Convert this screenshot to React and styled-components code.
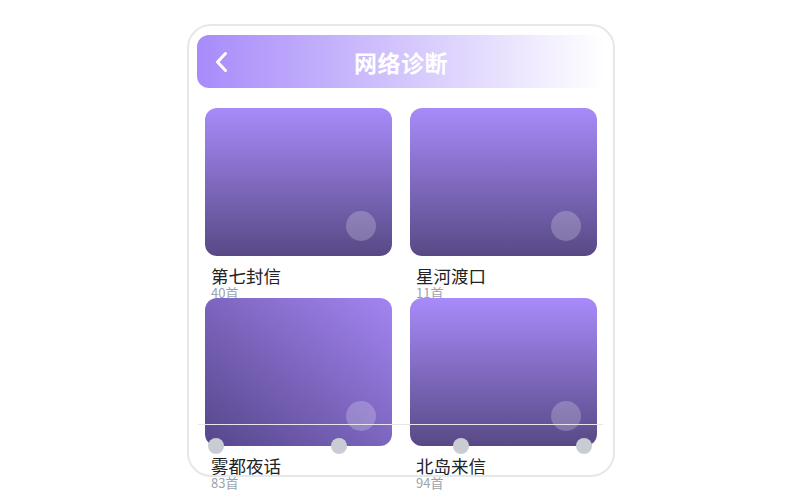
import styled, { createGlobalStyle } from "styled-components";

const Global = createGlobalStyle`
    body{
        margin: 0;
        background: #ffffff;
        font-family: "Noto Sans CJK SC", "Noto Sans", sans-serif;
    }
`
const Page = styled.div`
    width: 800px;
    height: 500px;
    display: flex;
    justify-content: center;
    padding: 24px 0 0 2px;
    box-sizing: border-box;
`
const Frame = styled.div`
    position: relative;
    width: 428px;
    height: 453px;
    box-sizing: border-box;
    border: 2px solid #e5e7eb;
    border-radius: 24px;
    padding: 9px 8px;
    background: #ffffff;
`
const Header = styled.div`
    position: relative;
    height: 53px;
    border-radius: 12px;
    background: linear-gradient(to right, #a78bfa, #ffffff);
    display: flex;
    align-items: center;
    justify-content: center;
    h1{
        margin: 0;
        color: #ffffff;
        font-size: 23px;
        font-weight: 700;
        letter-spacing: 0.5px;
    }
`
const BackButton = styled.button`
    position: absolute;
    left: 17px;
    top: 50%;
    transform: translateY(-50%);
    background: none;
    border: none;
    padding: 0;
    display: flex;
`
const Grid = styled.div`
    margin-top: 20px;
    padding: 0 8px;
    display: grid;
    grid-template-columns: 187px 187px;
    grid-auto-rows: 190px;
    column-gap: 18px;
`
const Item = styled.div`
    display: flex;
    flex-direction: column;
`
const Cover = styled.div`
    position: relative;
    flex-shrink: 0;
    height: 148px;
    border-radius: 12px;
    background: ${p => p.$diagonal
        ? "linear-gradient(to top right, #56468a, #a385f2)"
        : "linear-gradient(to bottom, #a78bfa, #584985)"};
`
const PlayDot = styled.div`
    position: absolute;
    right: 16px;
    bottom: 15px;
    width: 30px;
    height: 30px;
    border-radius: 50%;
    background: rgba(255,255,255,0.22);
`
const Name = styled.p`
    margin: 10px 0 0 6px;
    flex-shrink: 0;
    font-size: 17.5px;
    line-height: 20px;
    color: #222222;
`
const Count = styled.p`
    margin: 0 0 0 6px;
    flex-shrink: 0;
    font-size: 13px;
    line-height: 14px;
    color: #9ca3af;
`
const Track = styled.div`
    position: absolute;
    left: 9px;
    width: 405px;
    top: 398px;
    height: 1px;
    background: #e6e6ec;
`
const Stops = styled.div`
    position: absolute;
    left: 19px;
    width: 384px;
    top: 412px;
    display: flex;
    justify-content: space-between;
`
const Stop = styled.span`
    width: 16px;
    height: 16px;
    border-radius: 50%;
    background: #c9cdd3;
`

const albums = [
    { name: "第七封信", count: 40 },
    { name: "星河渡口", count: 11 },
    { name: "雾都夜话", count: 83, diagonal: true },
    { name: "北岛来信", count: 94 },
]

const App = () => {
    return (
        <Page>
            <Global />
            <Frame>
                <Header>
                    <BackButton>
                        <svg width="14" height="22" viewBox="0 0 14 22" fill="none">
                            <path d="M11.5 2.5 L3.5 11 L11.5 19.5" stroke="#ffffff" strokeWidth="3" strokeLinecap="round" strokeLinejoin="round" />
                        </svg>
                    </BackButton>
                    <h1>网络诊断</h1>
                </Header>
                <Grid>
                    {albums.map(a => (
                        <Item key={a.name}>
                            <Cover $diagonal={a.diagonal}>
                                <PlayDot />
                            </Cover>
                            <Name>{a.name}</Name>
                            <Count>{a.count}首</Count>
                        </Item>
                    ))}
                </Grid>
                <Track />
                <Stops>
                    <Stop /><Stop /><Stop /><Stop />
                </Stops>
            </Frame>
        </Page>
    )
}
export default App
